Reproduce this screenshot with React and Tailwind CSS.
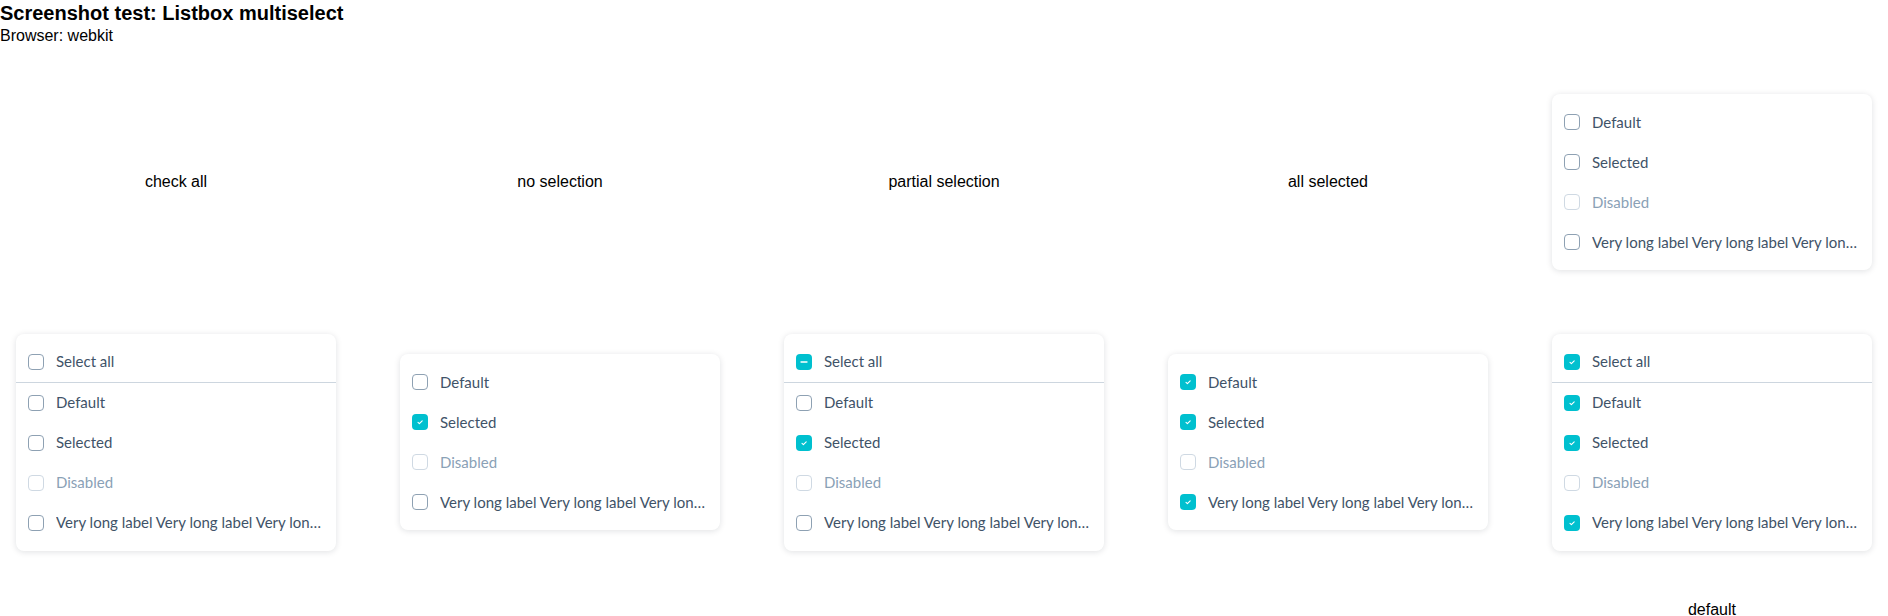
import React from 'react';

const Checkbox = ({ state, disabled }) => {
  if (state === 'checked' || state === 'mixed') {
    return (
      <span className="w-4 h-4 shrink-0 rounded-[4px] bg-[#00c0cf] flex items-center justify-center">
        <svg width="16" height="16" viewBox="0 0 16 16" fill="none">
          {state === 'checked' ? (
            <path d="M6 8.3l1.4 1.4 2.8-2.8" stroke="white" strokeWidth="1.1" strokeLinecap="round" strokeLinejoin="round" />
          ) : (
            <path d="M5 8h6" stroke="white" strokeWidth="1.3" strokeLinecap="round" />
          )}
        </svg>
      </span>
    );
  }
  return (
    <span
      className={`w-4 h-4 shrink-0 rounded-[4px] border bg-white ${disabled ? 'border-[#cfd9e3]' : 'border-[#8ea1b3]'}`}
    />
  );
};

const Option = ({ label, state, disabled, divider }) => (
  <div className={`flex items-center gap-3 px-3 h-10 ${divider ? 'h-[41px] border-b border-[#cdd6df]' : ''}`}>
    <Checkbox state={state} disabled={disabled} />
    <span className={`flex-1 min-w-0 truncate text-[15px] ${disabled ? 'text-[#8aa1b6]' : 'text-[#3f5368]'}`}>
      {label}
    </span>
  </div>
);

const longLabel = 'Very long label Very long label Very long label Very long label';

const Listbox = ({ selectAll, states = [] }) => (
  <div className="w-[320px] bg-white rounded-lg py-2 shadow-[0_1px_6px_rgba(15,23,42,0.13)]" style={{ fontFamily: 'Lato, "Noto Sans", sans-serif' }}>
    {selectAll && <Option label="Select all" state={selectAll} divider />}
    <Option label="Default" state={states[0]} />
    <Option label="Selected" state={states[1]} />
    <Option label="Disabled" disabled />
    <Option label={longLabel} state={states[2]} />
  </div>
);

const Label = ({ children }) => (
  <span className="text-[16px] text-black">{children}</span>
);

export default function App() {
  return (
    <div className="w-[1888px] h-[616px] overflow-hidden bg-white" style={{ fontFamily: '"Liberation Sans", Arial, sans-serif' }}>
      <div className="h-[52px]">
        <h1 className="text-[20px] font-bold leading-[26px] text-black">Screenshot test: Listbox multiselect</h1>
        <p className="text-[16px] leading-5 text-black">Browser: webkit</p>
      </div>

      <div className="grid grid-cols-[352px_352px_352px_352px_352px] gap-x-8">
        <div className="h-[260px] flex items-center justify-center"><Label>check all</Label></div>
        <div className="h-[260px] flex items-center justify-center"><Label>no selection</Label></div>
        <div className="h-[260px] flex items-center justify-center"><Label>partial selection</Label></div>
        <div className="h-[260px] flex items-center justify-center"><Label>all selected</Label></div>
        <div className="h-[260px] flex items-center justify-center"><Listbox /></div>

        <div className="h-[260px] flex items-center justify-center">
          <Listbox selectAll="empty" />
        </div>
        <div className="h-[260px] flex items-center justify-center">
          <Listbox states={[null, 'checked', null]} />
        </div>
        <div className="h-[260px] flex items-center justify-center">
          <Listbox selectAll="mixed" states={[null, 'checked', null]} />
        </div>
        <div className="h-[260px] flex items-center justify-center">
          <Listbox states={['checked', 'checked', 'checked']} />
        </div>
        <div className="h-[260px] flex items-center justify-center">
          <Listbox selectAll="checked" states={['checked', 'checked', 'checked']} />
        </div>

        <div className="col-start-5 flex justify-center pt-[26px]"><Label>default</Label></div>
      </div>
    </div>
  );
}
